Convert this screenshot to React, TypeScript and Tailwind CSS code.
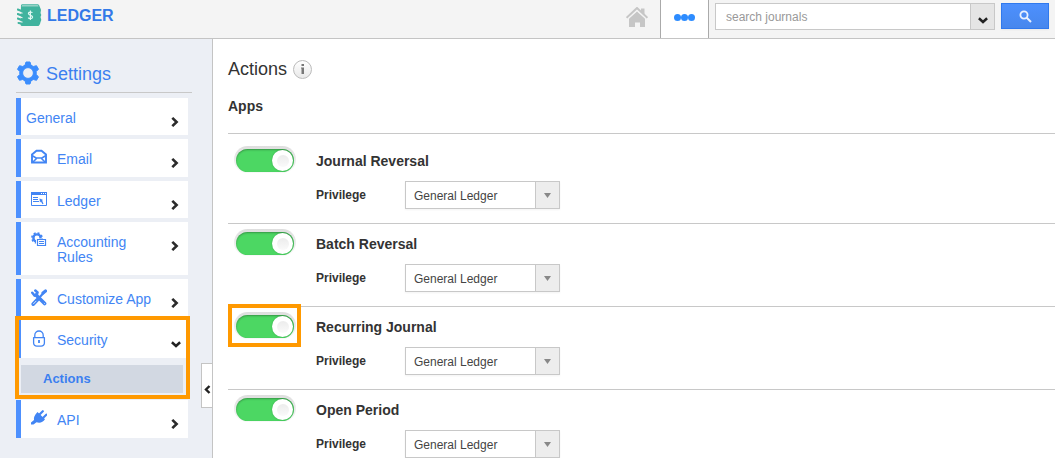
import { useState } from 'react';
import type { ReactNode } from 'react';

type MenuItem = {
  label: string;
  height: string;
  icon?: ReactNode;
};

const apps = ['Journal Reversal', 'Batch Reversal', 'Recurring Journal', 'Open Period'];

const LogoIcon = () => (
  <svg width="25" height="23" viewBox="0 0 25 23" aria-hidden="true">
    <path d="M4 1L5 .3h16L22 1l1.500 3.500.5 1.500-.5 3 .8 2-.8 2 .8 3-.8 2-.5 2-1 1.500L21.500 22H4.500L3.500 21z" fill="#40b39e" />
    <path d="M5 1h16l.6 1.500H4.500z" fill="#93d2c5" />
    <path d="M.8 5.500L4.500 7M.8 10L4.500 11.500M.8 14.500L4.500 16M1.500 19L4.500 19.500" stroke="#40b39e" strokeWidth="2" strokeLinecap="round" />
    <path d="M2.500 8.300l3 1M2.500 12.800l3 1M2.500 17.200l3 1" stroke="#f4f4f4" strokeWidth="1.200" />
    <path d="M15.400 8.800c-.6-1-4-1.300-4 .8 0 2.200 4.200 1.300 4.200 3.500 0 2-3.500 1.900-4.400.5M13.400 6.500v9.500" fill="none" stroke="#e2f8f3" strokeWidth="1.200" />
  </svg>
);

const HomeIcon = () => (
  <svg width="22" height="20" viewBox="0 0 22 20" aria-hidden="true">
    <path d="M3 11.800L11 4.500l8 7.300V20h-5v-4.500H9V20H3z" fill="#c6c6c6" />
    <path d="M.6 10.800L11 1l10.400 9.800" fill="none" stroke="#c6c6c6" strokeWidth="2" />
    <path d="M15 1.500h3.500v6L15 4.500z" fill="#c6c6c6" />
    <path d="M2.500 11.300L11 3.400l8.500 7.900" fill="none" stroke="#f4f4f4" strokeWidth=".7" />
  </svg>
);

const GearIcon = () => (
  <svg width="24" height="24" viewBox="0 0 24 24" aria-hidden="true">
    <path
      fill="#3b8dfd"
      stroke="#3b8dfd"
      strokeLinejoin="round"
      fillRule="evenodd"
      d="M10 1h4l.9 3.100 2.400 1.400 3.200-.8 2 3.500L20.200 10.500v3l2.300 2.300-2 3.500-3.200-.8-2.400 1.400L14 23h-4l-.9-3.100-2.400-1.400-3.200.8-2-3.500 2.300-2.300v-3L1.500 8.200l2-3.500 3.200.8 2.400-1.400zM12 6.600a5.400 5.400 0 1 0 0 10.800 5.400 5.400 0 0 0 0-10.800z"
    />
  </svg>
);

const EmailIcon = () => (
  <svg width="16" height="15" viewBox="0 0 16 15" fill="none" stroke="#4285f4" aria-hidden="true">
    <path d="M1 5.500L5.500 1.800h5L15 5.500V13.500H1z" strokeWidth="1.900" />
    <path d="M1 6.500L5 9h6l4-2.500M1.500 13.500L5.500 9.500M14.500 13.500l-4-4" strokeWidth="1.600" />
  </svg>
);

const LedgerIcon = () => (
  <svg width="16" height="15" viewBox="0 0 16 15" aria-hidden="true">
    <path d="M.5 1.500h15v13H.5z" fill="none" stroke="#4285f4" />
    <path d="M0 1h16v3H0z" fill="#4285f4" />
    <path d="M10 2h1v1h-1zM12 2h1v1h-1zM14 2h1v1h-1z" fill="#fff" />
    <path d="M2 6.500h5M2 8.500h5M2 10.500h6" stroke="#4285f4" />
    <path d="M8.500 7.500l3.300 1.200-.6 1 1.300 3-1 .6-1.600-2.800-1 1z" fill="#4285f4" />
  </svg>
);

const RulesIcon = () => (
  <svg width="16" height="15" viewBox="0 0 16 15" aria-hidden="true">
    <circle cx="6" cy="6" r="3.600" fill="none" stroke="#4285f4" strokeWidth="2.400" />
    <circle cx="6" cy="6" r="5.100" fill="none" stroke="#4285f4" strokeWidth="1.600" strokeDasharray="2 2" />
    <path d="M5 6.500h11V15H5z" fill="#fff" />
    <path d="M6.500 7.500h8v6h-8z" fill="#fff" stroke="#4285f4" strokeWidth="1.200" />
    <path d="M8 9.500h5M8 11.500h5" stroke="#4285f4" />
  </svg>
);

const ToolsIcon = () => (
  <svg width="16" height="17" viewBox="0 0 16 17" fill="none" stroke="#4285f4" strokeLinecap="round" aria-hidden="true">
    <path d="M5 6l8.600 8.600" strokeWidth="3.600" />
    <path d="M1.300 3.800l2.200 2.700 2.300-.6.700-2.400L4.300 1.500" strokeWidth="2.500" />
    <path d="M2.300 15l4-4.200" strokeWidth="3.800" />
    <path d="M7 10l5.500-6" strokeWidth="2.200" />
    <path d="M12 4l2.500-2" strokeWidth="3.200" />
    <path d="M13.200 14.200l.2.200M2.500 14.800l2.500-2.600" stroke="#fff" strokeWidth=".8" />
  </svg>
);

const LockIcon = () => (
  <svg width="16" height="17" viewBox="0 0 16 17" fill="none" stroke="#4285f4" aria-hidden="true">
    <path d="M3.800 8V5.200a4.200 4.200 0 0 1 8.400 0V8" strokeWidth="1.300" />
    <path d="M2.600 7.600h10.800v5.400a3.200 3.200 0 0 1-3.200 3.200H5.800A3.200 3.200 0 0 1 2.600 13z" strokeWidth="1.300" strokeLinejoin="round" />
    <path d="M8 10v3" strokeWidth="1.800" />
  </svg>
);

const PlugIcon = () => (
  <svg width="16" height="15" viewBox="0 0 16 15" aria-hidden="true">
    <path d="M0 14.500v-2L3 10C2.600 7.500 3.500 5 6.500 2l7.500 7.300c-2 3-5 4-8.500 3L2.500 14.500z" fill="#4285f4" />
    <path d="M8.500 4.500L11.800 1.200M12 8l3.300-3.300" stroke="#4285f4" strokeWidth="2.200" strokeLinecap="round" />
  </svg>
);

const ChevronRight = () => (
  <svg width="8" height="10" viewBox="0 0 8 10" aria-hidden="true">
    <path d="M1.300 .9L5.600 5 1.300 9.100" fill="none" stroke="#2b2b2b" strokeWidth="2.600" />
  </svg>
);

const ChevronDown = () => (
  <svg width="10" height="7" viewBox="0 0 10 7" aria-hidden="true">
    <path d="M.9 1.300L5 5l4.100-3.700" fill="none" stroke="#222" strokeWidth="2.500" />
  </svg>
);

const menu: MenuItem[] = [
  { label: 'General', height: 'h-[37px]' },
  { label: 'Email', height: 'h-[38px]', icon: <EmailIcon /> },
  { label: 'Ledger', height: 'h-[37px]', icon: <LedgerIcon /> },
  { label: 'Accounting Rules', height: 'h-[53px]', icon: <RulesIcon /> },
  { label: 'Customize App', height: 'h-[37px]', icon: <ToolsIcon /> },
];

const MenuLink = ({ item, open }: { item: MenuItem; open?: boolean }) => (
  <a
    href="#"
    className={`flex items-start border-l-[5px] border-[#4d90fe] bg-white text-sm leading-[15px] text-[#4285f4] ${item.height}`}
  >
    {item.icon && <span className="ml-[10px] mt-[10px] w-4 shrink-0">{item.icon}</span>}
    <span className={item.icon ? 'ml-[10px] mt-[13px] w-[100px]' : 'ml-[5px] mt-[13px]'}>{item.label}</span>
    <span className={open ? 'ml-auto mr-[7px] mt-[21px]' : 'ml-auto mr-[9px] mt-[19px]'}>
      {open ? <ChevronDown /> : <ChevronRight />}
    </span>
  </a>
);

const Header = () => (
  <header className="flex h-[39px] items-start border-b border-[#c4c4c4] bg-[#f4f4f4]">
    <a href="#" className="ml-[17px] mt-1 flex items-start gap-[5px] text-base font-bold text-[#3379e8]">
      <LogoIcon />
      LEDGER
    </a>
    <nav className="ml-auto flex h-full">
      <a href="#" aria-label="Home" className="mr-3 mt-[7px]">
        <HomeIcon />
      </a>
      <button
        type="button"
        aria-label="More"
        className="flex h-full w-[49px] items-start justify-center border-x border-[#aaa] bg-white pt-[14px]"
      >
        <span className="size-[7px] rounded-full bg-[#2d8cff]"></span>
        <span className="size-[7px] rounded-full bg-[#2d8cff]"></span>
        <span className="size-[7px] rounded-full bg-[#2d8cff]"></span>
      </button>
    </nav>
    <form className="ml-[6px] mr-[6px] mt-[3px] flex items-start" onSubmit={(e) => e.preventDefault()}>
      <input
        type="text"
        aria-label="Search journals"
        placeholder="search journals"
        className="h-[27px] w-64 border border-[#c8c8c8] bg-white px-[10px] text-xs outline-none placeholder:text-[#999]"
      />
      <button
        type="button"
        aria-label="Search options"
        className="flex h-[27px] w-6 items-end justify-center border border-l-0 border-[#c8c8c8] bg-[#e5e5e5] pb-[5px]"
      >
        <ChevronDown />
      </button>
      <button
        type="submit"
        aria-label="Search"
        className="ml-[6px] flex h-[26px] w-12 items-center justify-center border border-[#3079ed] bg-linear-to-b from-[#4d90fe] to-[#4787ed] shadow-xs"
      >
        <svg width="13" height="13" viewBox="0 0 13 13" fill="none" stroke="#e8f0fe" aria-hidden="true">
          <circle cx="5" cy="5" r="3.600" strokeWidth="1.800" />
          <path d="M7.500 7.500l4.500 4.500" strokeWidth="2" />
        </svg>
      </button>
    </form>
  </header>
);

const Sidebar = () => (
  <aside className="relative w-[213px] shrink-0 border-r border-[#c4c4c4] bg-[#eceff5] pl-4 pr-5 pt-[22px]">
    <h2 className="flex h-8 items-start gap-[6px] border-b border-[#c8c8c8] text-lg leading-[26px] text-[#3b7ff0]">
      <GearIcon />
      Settings
    </h2>
    <nav className="mr-1 mt-[5px] flex flex-col gap-1">
      {menu.map((item) => (
        <MenuLink key={item.label} item={item} />
      ))}
      <div className="relative pb-[3px]">
        <MenuLink item={{ label: 'Security', height: 'h-[38px]', icon: <LockIcon /> }} open />
        <a
          href="#"
          className="ml-[5px] mr-[5px] mt-[7px] block h-7 bg-[#d2d8e2] pl-[22px] text-[13px] font-bold leading-7 text-[#3b7ff0]"
        >
          Actions
        </a>
        <span className="pointer-events-none absolute -bottom-[3px] -left-px -right-[2px] -top-1 border-4 border-[#ff9900]"></span>
      </div>
      <MenuLink item={{ label: 'API', height: 'h-[38px]', icon: <PlugIcon /> }} />
    </nav>
    {/* Collapse handle */}
    <button
      type="button"
      aria-label="Collapse sidebar"
      className="absolute right-0 top-[324px] flex h-[45px] w-[11px] items-center justify-center border border-r-0 border-[#c4c4c4] bg-white pt-2"
    >
      <svg width="7" height="9" viewBox="0 0 7 9" aria-hidden="true">
        <path d="M5.500 1L2 4.500 5.500 8" fill="none" stroke="#222" strokeWidth="2.400" />
      </svg>
    </button>
  </aside>
);

const AppRow = ({ name, first, highlighted }: { name: string; first: boolean; highlighted: boolean }) => {
  const [enabled, setEnabled] = useState(true);
  const id = name.toLowerCase().replace(' ', '-');

  return (
    <section className={`flex border-t border-[#c8c8c8] pb-[14px] last:pb-0 ${first ? 'pt-[7px]' : ''}`}>
      <div className="relative w-[88px] shrink-0 pl-[6px] pt-[5px]">
        <label className="block h-[27px] w-[62px] rounded-full bg-linear-to-b from-[#dedede] to-[#f8f8f8] px-[2px] pt-[3px]">
          <input
            type="checkbox"
            aria-label={name}
            checked={enabled}
            onChange={() => setEnabled(!enabled)}
            className="peer sr-only"
          />
          <span className="flex h-[23px] items-center rounded-full bg-[#ccc] px-px shadow-[inset_0_1px_2px_rgba(0,0,0,0.3)] peer-checked:justify-end peer-checked:bg-[#4cd763]">
            <span className="flex size-[21px] items-center justify-center rounded-full bg-white shadow-[0_0_2px_rgba(0,0,0,0.2)]">
              <span className="size-3 rounded-full bg-linear-to-b from-[#ececec] to-[#fafafa]"></span>
            </span>
          </span>
        </label>
        {highlighted && (
          <span className="pointer-events-none absolute -top-[3px] left-0 h-[43px] w-[73px] border-4 border-[#ff9900]"></span>
        )}
      </div>
      <div className="pt-[10px]">
        <h4 className="text-sm font-bold leading-5">{name}</h4>
        <div className="mt-[10px] flex items-center">
          <label htmlFor={id} className="w-[89px] text-xs font-bold">
            Privilege
          </label>
          <div className="relative">
            <select
              id={id}
              className="block h-7 w-[155px] appearance-none border border-[#c8c8c8] bg-white pl-2 pr-7 pt-px text-xs text-[#444] shadow-xs"
            >
              <option>General Ledger</option>
            </select>
            <span className="pointer-events-none absolute inset-y-px right-px flex w-6 items-center justify-center border-l border-[#c8c8c8] bg-[#ededed]">
              <svg width="7" height="5" viewBox="0 0 7 5" aria-hidden="true">
                <path d="M0 0h7L3.500 5z" fill="#888" />
              </svg>
            </span>
          </div>
        </div>
      </div>
    </section>
  );
};

const App = () => (
  <div className="flex min-h-screen flex-col bg-white font-['Liberation_Sans',Arial,sans-serif] text-[#333]">
    <Header />
    <div className="flex grow">
      <Sidebar />
      <main className="min-w-0 grow pl-[15px] pt-4">
        <h1 className="flex items-center gap-[6px] text-lg leading-7">
          Actions
          <button
            type="button"
            aria-label="About actions"
            className="flex size-[19px] items-center justify-center rounded-full border border-[#bbb] bg-linear-to-b from-white to-[#e8e8e8]"
          >
            <svg width="5" height="10" viewBox="0 0 5 10" aria-hidden="true">
              <path d="M1.500 0H4v2H1.500zM1 3.500h3V10H1.500V4.500H1z" fill="#777" />
            </svg>
          </button>
        </h1>
        <h3 className="mb-[17px] mt-[13px] text-sm font-bold leading-5">Apps</h3>
        {apps.map((name, i) => (
          <AppRow key={name} name={name} first={i === 0} highlighted={name === 'Recurring Journal'} />
        ))}
      </main>
    </div>
  </div>
);

export default App;
